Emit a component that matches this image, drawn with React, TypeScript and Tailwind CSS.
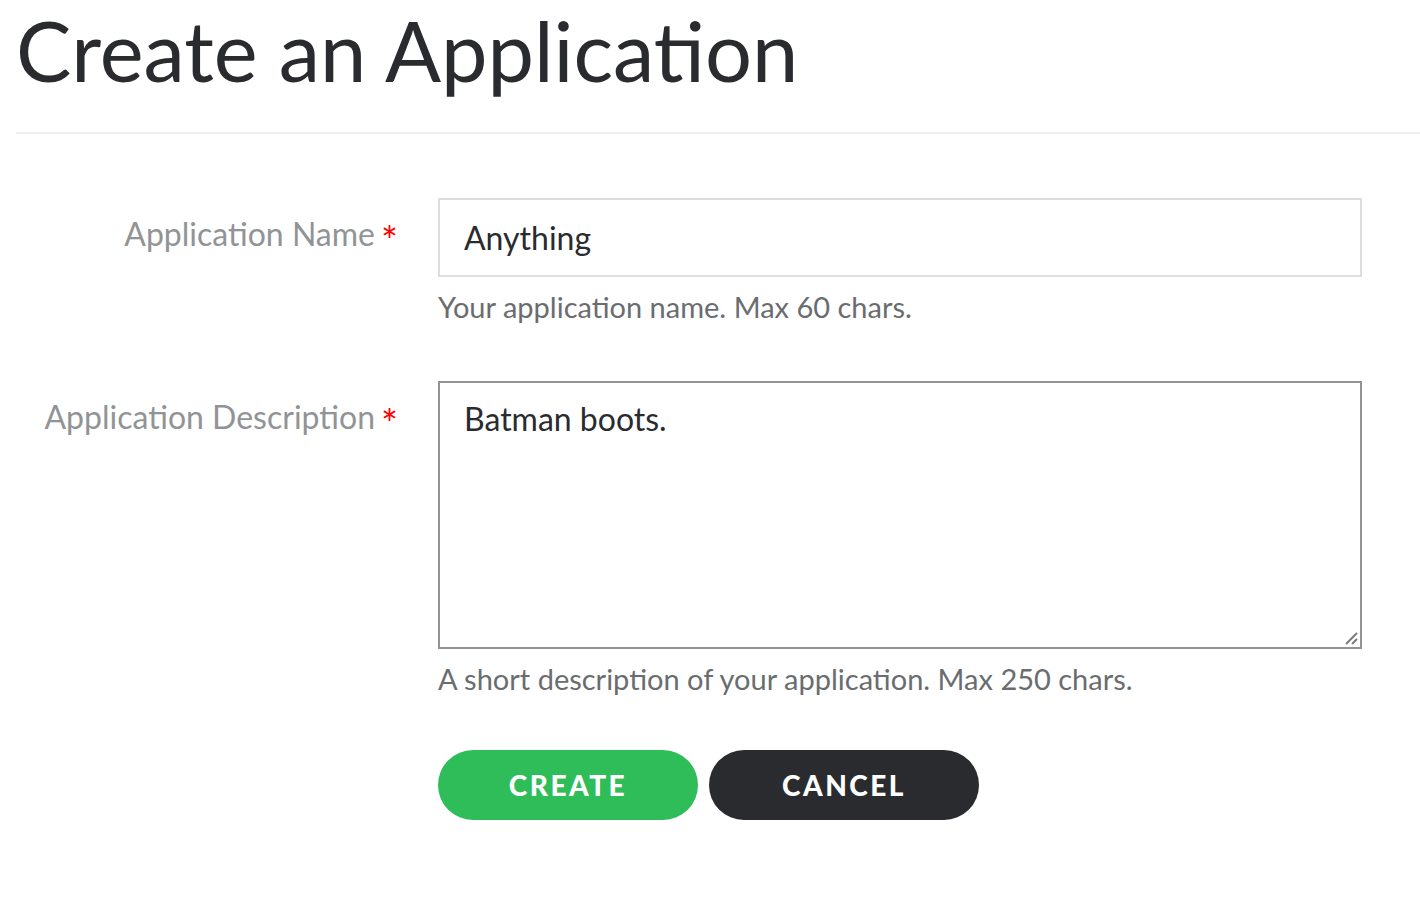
import React from "react";

export default function App() {
  const font = { fontFamily: "Lato, 'Noto Sans', sans-serif" };
  return (
    <div className="min-h-[902px] w-[1420px] bg-white text-[#2a2b2f]" style={font}>
      <div className="pl-4">
        <h1 className="text-[83px] leading-[100px] font-normal text-[#2a2b2f]">
          Create an Application
        </h1>
        <div className="mt-[32px] h-[2px] bg-[#eeeeee]" />
        <form className="mt-[64px] flex flex-col">
          <div className="flex">
            <div className="w-[382px] shrink-0 pt-[16px] text-right text-[32px] leading-[40px] text-[#919496]">
              Application Name<span className="relative top-[10px] ml-[6px] text-[40px] leading-[0] text-[#ff0000]">*</span>
            </div>
            <div className="ml-[40px] w-[924px]">
              <div className="flex h-[79px] items-center border-2 border-[#dddddd] px-[24px] text-[32px] text-[#2a2b2f]">
                Anything
              </div>
              <div className="mt-[12px] text-[29px] leading-[36px] text-[#6a6d70]">
                Your application name. Max 60 chars.
              </div>
            </div>
          </div>
          <div className="mt-[56px] flex">
            <div className="w-[382px] shrink-0 pt-[16px] text-right text-[32px] leading-[40px] text-[#919496]">
              Application Description<span className="relative top-[10px] ml-[6px] text-[40px] leading-[0] text-[#ff0000]">*</span>
            </div>
            <div className="ml-[40px] w-[924px]">
              <div className="relative h-[268px] border-2 border-[#919496] px-[24px] pt-[16px] text-[32px] leading-[40px] text-[#2a2b2f]">
                Batman boots.
                <svg className="absolute bottom-[2px] right-[2px]" width="14" height="14" viewBox="0 0 14 14">
                  <line x1="2" y1="13" x2="13" y2="2" stroke="#7a7a7a" strokeWidth="2" />
                  <line x1="8" y1="13" x2="13" y2="8" stroke="#7a7a7a" strokeWidth="2" />
                </svg>
              </div>
              <div className="mt-[12px] text-[29px] leading-[36px] text-[#6a6d70]">
                A short description of your application. Max 250 chars.
              </div>
              <div className="mt-[53px] flex gap-[11px]">
                <button type="button" className="h-[70px] w-[260px] rounded-full bg-[#2ebd59] text-[28px] font-black tracking-[2.5px] text-white">
                  CREATE
                </button>
                <button type="button" className="h-[70px] w-[270px] rounded-full bg-[#2a2b2f] text-[28px] font-black tracking-[2.5px] text-white">
                  CANCEL
                </button>
              </div>
            </div>
          </div>
        </form>
      </div>
    </div>
  );
}
